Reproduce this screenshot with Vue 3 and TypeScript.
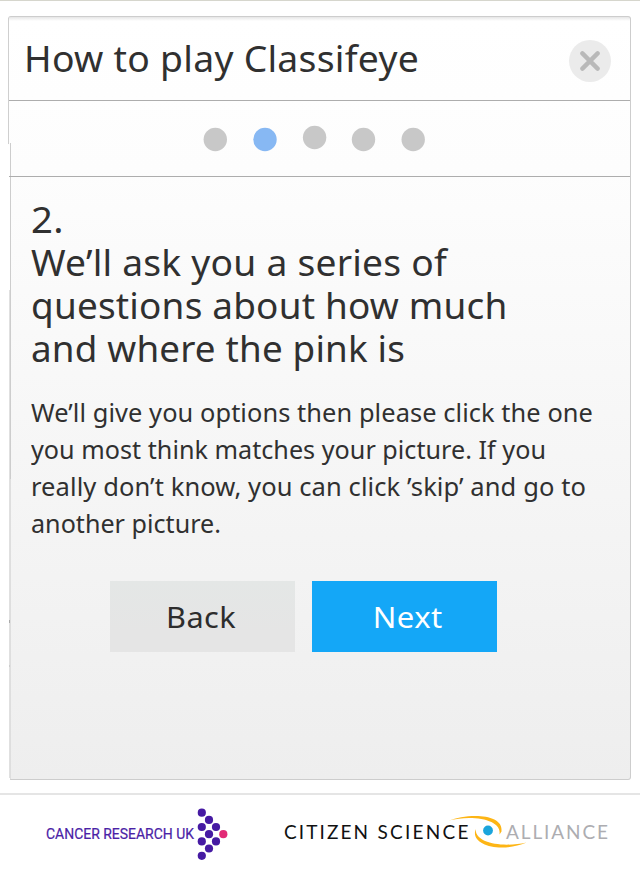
<script setup lang="ts">
import type { Directive } from 'vue'

interface Line {
  text: string
  width: number
}

const title: Line = { text: 'How to play Classifeye', width: 395 }
const dots = [
  { x: 215.3, y: 139.5 },
  { x: 265, y: 139.5 },
  { x: 314.6, y: 137.5 },
  { x: 363.5, y: 139.5 },
  { x: 413.2, y: 139.5 },
]
const current = 1

const heading: Line[] = [
  { text: '2.', width: 33 },
  { text: 'We’ll ask you a series of', width: 416 },
  { text: 'questions about how much', width: 476.5 },
  { text: 'and where the pink is', width: 374 },
]

const body: Line[] = [
  { text: 'We’ll give you options then please click the one', width: 562 },
  { text: 'you most think matches your picture. If you', width: 515 },
  { text: 'really don’t know, you can click ’skip’ and go to', width: 555 },
  { text: 'another picture.', width: 190 },
]

const crukDots = [
  [201.8, 812.7], [209, 819.9], [201.8, 827], [216, 827], [209, 834.2],
  [201.8, 841.4], [216, 841.4], [209, 848.5], [201.8, 855.8],
]

/* Widens and tracks a line of text so that it fills the given measure. */
const vFit: Directive<HTMLElement, number> = {
  mounted(el, binding) {
    const natural = el.getBoundingClientRect().width
    const count = (el.textContent ?? '').length
    const stretch = 1 + (binding.value / natural - 1) * 0.7
    el.style.letterSpacing = `${(binding.value / stretch - natural) / count}px`
    el.style.transform = `scaleX(${stretch})`
  },
}
</script>

<template>
  <div class="page">
    <main class="panel">
      <header class="head">
        <h1><span v-fit="title.width" class="line">{{ title.text }}</span></h1>
        <button class="close" aria-label="Close">
          <svg width="20" height="20" viewBox="0 0 20 20">
            <path d="M2.4 2.4 17.6 17.6M17.6 2.4 2.4 17.6" />
          </svg>
        </button>
      </header>
      <nav class="steps">
        <svg width="240" height="30" viewBox="194 124 240 30">
          <circle
            v-for="(d, i) in dots"
            :key="i"
            class="dot"
            :class="{ active: i === current }"
            :cx="d.x"
            :cy="d.y"
            r="11.7"
          />
        </svg>
      </nav>
      <section class="content">
        <h2>
          <div v-for="l in heading" :key="l.text"><span v-fit="l.width" class="line">{{ l.text }}</span></div>
        </h2>
        <div class="copy">
          <div v-for="l in body" :key="l.text"><span v-fit="l.width" class="line">{{ l.text }}</span></div>
        </div>
        <div class="actions">
          <button class="btn back"><span v-fit="70" class="line mid">Back</span></button>
          <button class="btn next"><span v-fit="70" class="line mid">Next</span></button>
        </div>
      </section>
      <svg class="edge" width="4" height="764" viewBox="0 0 4 764">
        <path d="M0 129h2v635H0z" fill="#fff" />
        <path d="M.5 2v126" stroke="#cfcfcf" />
        <path d="M1.5 274v488" stroke="#e0e0e0" />
        <path d="M2.5 127v336" stroke="#cdcdcd" />
        <path d="M2.5 463v300" stroke="#dedede" />
        <path d="M1 160.5h3" stroke="#adadad" />
        <path d="M1.5 604v3" stroke="#aaa" />
        <path d="M1.5 649v2" stroke="#ccc" />
      </svg>
    </main>
    <footer class="foot">
      <svg width="640" height="77" viewBox="0 795 640 77">
        <text class="cruk" x="46" y="839" textLength="148" lengthAdjust="spacingAndGlyphs">CANCER RESEARCH UK</text>
        <circle v-for="(c, i) in crukDots" :key="i" :cx="c[0]" :cy="c[1]" r="4.1" fill="#461aa3" />
        <circle cx="223.3" cy="834.2" r="4.1" fill="#e22a76" />
        <text class="csa" x="284" y="838.5" textLength="84" lengthAdjust="spacing">CITIZEN</text>
        <text class="csa" x="377.5" y="838.5" textLength="91" lengthAdjust="spacing">SCIENCE</text>
        <path d="M449 820.5C466 813.5 504 812.5 501.5 831.5L499.5 834.5C502.5 819 471 814.5 449 820.5Z" fill="#fdb515" />
        <path d="M475.7 829C469.5 845.5 501 853.5 526.5 842.5C504 847.5 475 844 475.7 829Z" fill="#fdb515" />
        <circle cx="488" cy="830.5" r="4.9" fill="#1ba5dc" />
        <text class="csa pale" x="506" y="838.5" textLength="102" lengthAdjust="spacing">ALLIANCE</text>
      </svg>
    </footer>
  </div>
</template>

<style>
body {
  margin: 0;
  background: #fff;
}
</style>

<style scoped>
.page {
  box-sizing: border-box;
  width: 640px;
  height: 872px;
  display: flex;
  flex-direction: column;
  border-top: 1px solid #d6d6cd;
  background: #fff;
  color: #303030;
  font-family: 'Noto Sans', 'Open Sans', sans-serif;
}
.panel {
  position: relative;
  box-sizing: border-box;
  flex: none;
  width: 623px;
  height: 764px;
  margin: 15px 0 0 8px;
  padding-left: 1px;
  border: 1px solid #cdcdcd;
  border-left: 0;
  border-radius: 3px;
  background: linear-gradient(#e6e6e6, #ffffff 4px, #fdfdfd 20%, #eeeeee);
}
.edge {
  position: absolute;
  left: 0;
  top: -1px;
}
.head {
  box-sizing: border-box;
  height: 84px;
  display: flex;
  align-items: flex-start;
  justify-content: space-between;
  padding: 23px 19px 0 15px;
  border-bottom: 1px solid #adadad;
}
h1, h2 {
  margin: 0;
  font-weight: 400;
}
h1 {
  font-size: 36px;
  line-height: 38px;
}
.line {
  display: inline-block;
  white-space: nowrap;
  transform-origin: 0 50%;
}
.line.mid {
  transform-origin: 50% 50%;
}
.close {
  display: flex;
  align-items: center;
  justify-content: center;
  width: 42px;
  height: 42px;
  padding: 0;
  border: 0;
  border-radius: 50%;
  background: #ebebeb;
}
.close path {
  fill: none;
  stroke: #b9b9b9;
  stroke-width: 4.4;
  stroke-linecap: round;
}
.steps {
  box-sizing: border-box;
  height: 76px;
  padding: 23px 0 0 185px;
  border-bottom: 1px solid #adadad;
}
.steps svg {
  display: block;
}
.dot {
  fill: #c8c8c8;
}
.dot.active {
  fill: #87b8f3;
}
.content {
  padding: 21px 0 0 22px;
}
h2 {
  font-size: 36px;
  line-height: 43px;
}
.copy {
  margin-top: 24px;
  font-size: 25px;
  line-height: 37px;
}
.actions {
  display: flex;
  gap: 17px;
  padding: 39px 0 0 79px;
}
.btn {
  width: 185px;
  height: 71px;
  padding: 0;
  border: 0;
  font: 400 29px/40px 'Noto Sans', 'Open Sans', sans-serif;
}
.back {
  padding-right: 2px;
  background: linear-gradient(#e4e7e6, #e5e5e5 70%);
  color: #2d2d2d;
}
.next {
  padding-left: 6px;
  background: #14a7f7;
  color: #fff;
}
.foot {
  height: 77px;
  margin-top: 13px;
  border-top: 2px solid #e5e5e5;
}
.foot svg {
  display: block;
}
.cruk {
  font: 400 15px Roboto, sans-serif;
  fill: #4a22a6;
  stroke: #4a22a6;
  stroke-width: 0.2px;
}
.csa {
  font: 400 19px Lato, sans-serif;
  fill: #111;
}
.pale {
  fill: #adadb1;
}
</style>
